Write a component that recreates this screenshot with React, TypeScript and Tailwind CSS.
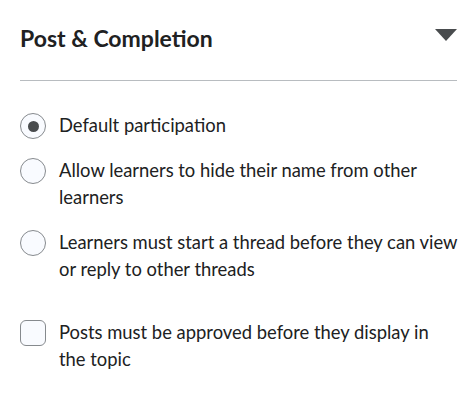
export default function App() {
  const font = { fontFamily: 'Lato, "Noto Sans", sans-serif' };
  return (
    <div className="w-[474px] h-[395px] bg-white pl-5 pr-4 pt-[18px]" style={font}>
      <div className="flex items-center justify-between h-10">
        <h2 className="text-[23px] font-bold text-[#202122] leading-10">Post &amp; Completion</h2>
        <svg width="22" height="12" viewBox="0 0 22 12" className="mr-px -mt-[6px]">
          <path d="M0 0 H22 L11 12 Z" fill="#494c4e" />
        </svg>
      </div>
      <div className="mt-[22px] mr-[1px] h-px bg-[#b8bcc0]" />

      <div className="mt-[31px] flex flex-col gap-[18px]">
        <Radio checked label="Default participation" />
        <Radio label="Allow learners to hide their name from other learners" />
        <Radio label="Learners must start a thread before they can view or reply to other threads" />
      </div>

      <div className="mt-9 flex items-start gap-[13px] pr-3">
        <span className="mt-px w-[26px] h-[26px] shrink-0 rounded-[6px] border border-[#868a8e] bg-[#f9fbff]" />
        <span className="text-[18.4px] leading-[27px] text-[#202122]">
          Posts must be approved before they display in the topic
        </span>
      </div>
    </div>
  );
}

function Radio({ label, checked = false }: { label: string; checked?: boolean }) {
  return (
    <div className="flex items-start gap-[13px]">
      <span className="mt-px w-[26px] h-[26px] shrink-0 rounded-full border border-[#868a8e] bg-[#f9fbff] flex items-center justify-center">
        {checked && <span className="w-[11px] h-[11px] rounded-full bg-[#494c4e]" />}
      </span>
      <span className="text-[18.4px] leading-[27px] text-[#202122]">{label}</span>
    </div>
  );
}
